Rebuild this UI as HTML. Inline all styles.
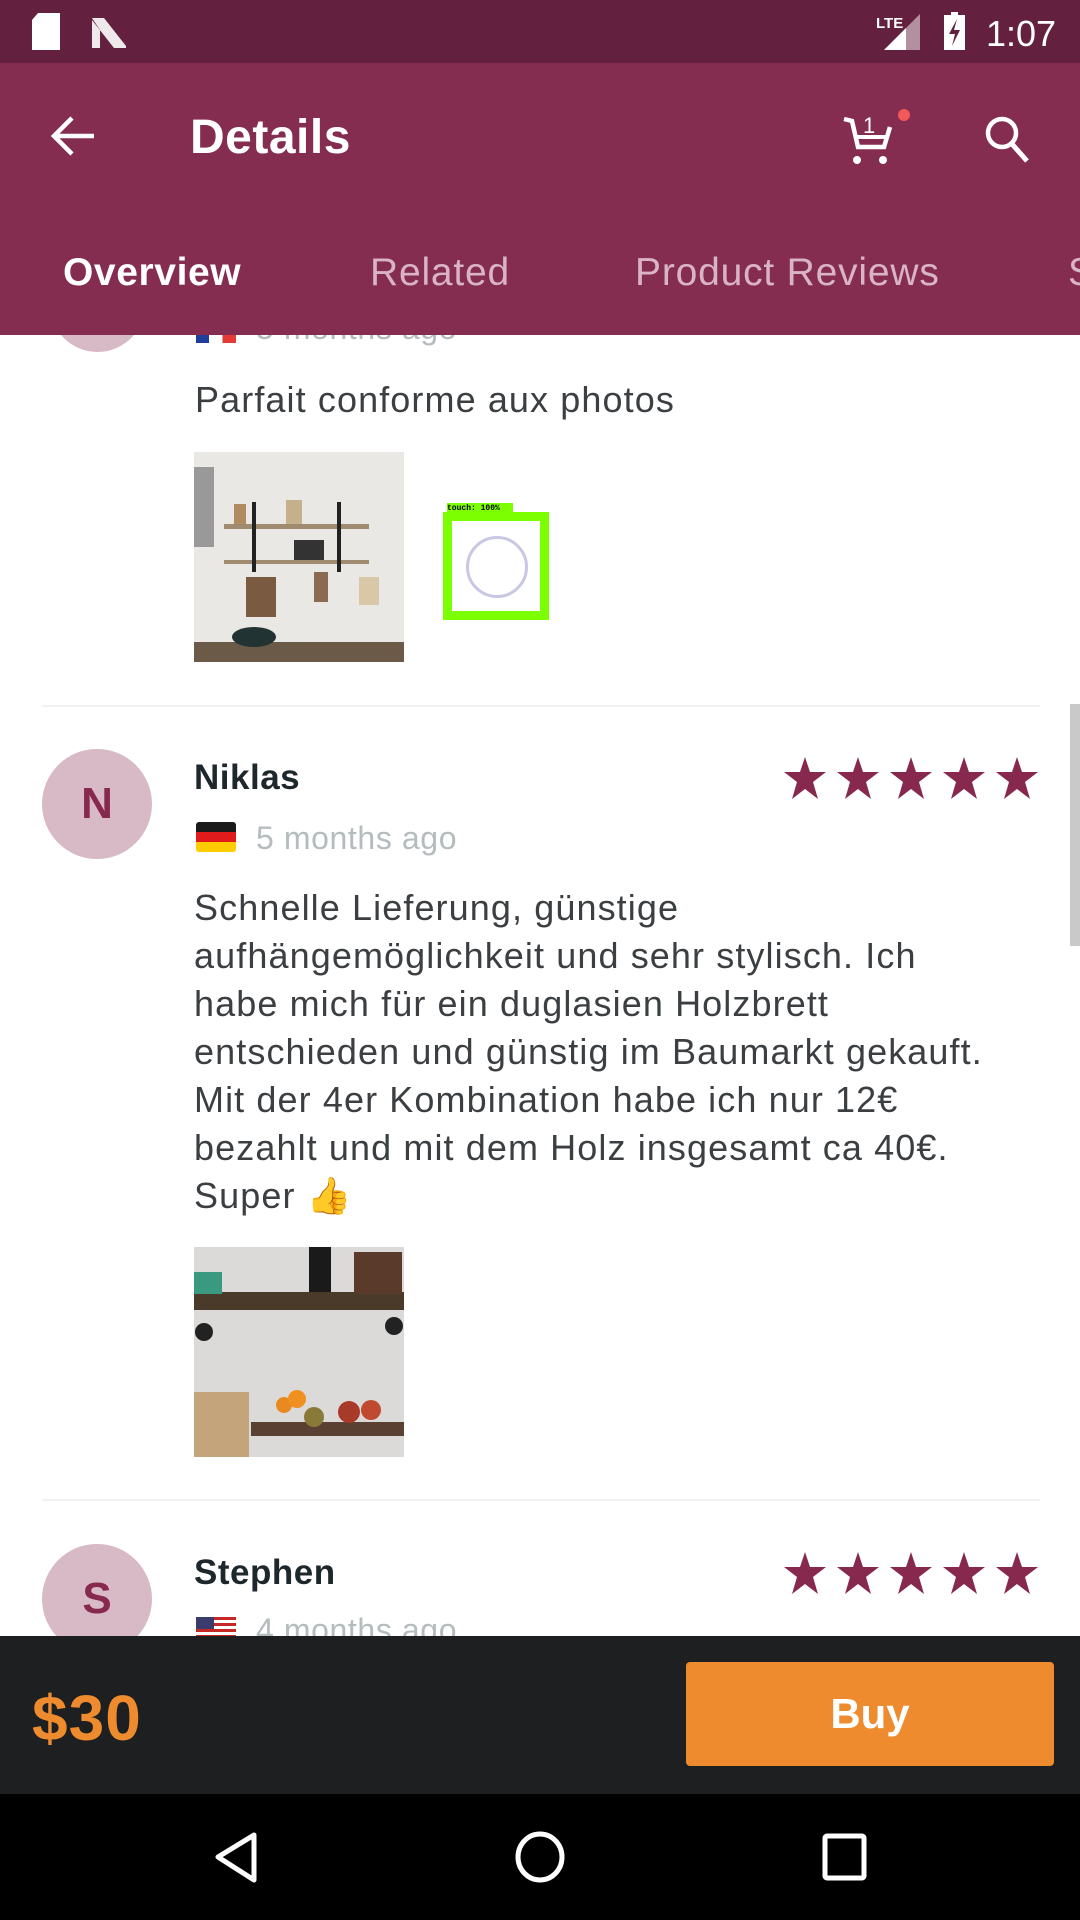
<!DOCTYPE html>
<html><head><meta charset="utf-8"><style>
*{margin:0;padding:0;box-sizing:border-box}
body{width:1080px;height:1920px;position:relative;overflow:hidden;background:#fff;font-family:"Liberation Sans",sans-serif}
.abs{position:absolute}
.t{position:absolute;white-space:nowrap}
.body{color:#3b3f42;font-size:36px;line-height:48px;letter-spacing:1.1px}
.gray{color:#b4bcbd;font-size:32px;letter-spacing:0.6px}
.name{color:#1e272c;font-size:35px;font-weight:bold;letter-spacing:0.5px}
.av{position:absolute;width:110px;height:110px;border-radius:50%;background:#d8b9c6;color:#87294f;font-size:44px;font-weight:bold;text-align:center;line-height:110px}
.tab{color:#d9b3c6;font-size:39px;letter-spacing:0.8px}
</style></head><body>
<!-- content -->
<div class="abs" style="left:50px;top:300px;width:95px;height:52px;border-radius:0 0 48px 48px;background:#d8b9c6"></div>
<div class="abs" style="left:196px;top:333px;width:40px;height:10px;background:linear-gradient(90deg,#1f3f9a 33%,#fff 33%,#fff 66%,#e53935 66%)"></div>
<div class="t gray" style="left:256px;top:310px">5 months ago</div>
<div class="t body" style="left:195px;top:376px">Parfait conforme aux photos</div>
<svg class="abs" style="left:194px;top:452px" width="210" height="210" viewBox="0 0 210 210">
<rect width="210" height="210" fill="#e9e8e4"/><rect x="0" y="190" width="210" height="20" fill="#6b5a48"/>
<rect x="30" y="72" width="145" height="5" fill="#a08a70"/><rect x="30" y="108" width="145" height="4" fill="#a08a70"/>
<rect x="58" y="50" width="4" height="70" fill="#222"/><rect x="143" y="50" width="4" height="70" fill="#222"/>
<rect x="40" y="52" width="12" height="20" fill="#b08a60"/><rect x="92" y="48" width="16" height="24" fill="#c4b08a"/>
<rect x="100" y="88" width="30" height="20" fill="#333"/><rect x="52" y="125" width="30" height="40" fill="#7a5a40"/>
<rect x="120" y="120" width="14" height="30" fill="#8a6a50"/><rect x="165" y="125" width="20" height="28" fill="#d8c8a8"/>
<rect x="0" y="15" width="20" height="80" fill="#999"/><ellipse cx="60" cy="185" rx="22" ry="10" fill="#233"/></svg>
<div class="abs" style="left:443px;top:512px;width:106px;height:108px;border:9px solid #7cff00"></div>
<div class="abs" style="left:447px;top:503px;width:66px;height:11px;background:#7cff00;font:bold 8px 'Liberation Mono',monospace;color:#000;line-height:11px">touch: 100%</div>
<div class="abs" style="left:466px;top:536px;width:62px;height:62px;border-radius:50%;border:3px solid #c8c8e4"></div>
<div class="abs" style="left:42px;top:705px;width:998px;height:2px;background:#f1f1f1"></div>
<div class="abs" style="left:1070px;top:704px;width:10px;height:242px;background:#c9c9c9"></div>

<div class="av" style="left:42px;top:749px">N</div>
<div class="t name" style="left:194px;top:758px">Niklas</div>
<svg class="abs" style="left:784px;top:757px" width="256" height="42" viewBox="0 0 256 42" fill="#87294f">
<g id="s"><path d="M21 0 L26 15 L42 15 L29 25 L34 42 L21 32 L8 42 L13 25 L0 15 L16 15Z"/></g>
<use href="#s" x="53"/><use href="#s" x="106"/><use href="#s" x="159"/><use href="#s" x="212"/></svg>
<div class="abs" style="left:196px;top:822px;width:40px;height:30px;border-radius:3px;background:linear-gradient(#1a1a1a 33%,#e01b1b 33%,#e01b1b 66%,#ffcc00 66%)"></div>
<div class="t gray" style="left:256px;top:820px">5 months ago</div>
<div class="t body" style="left:194px;top:884px">Schnelle Lieferung, günstige<br>aufhängemöglichkeit und sehr stylisch. Ich<br>habe mich für ein duglasien Holzbrett<br>entschieden und günstig im Baumarkt gekauft.<br>Mit der 4er Kombination habe ich nur 12€<br>bezahlt und mit dem Holz insgesamt ca 40€.<br>Super <span style="color:#f0d0b8">👍</span></div>
<svg class="abs" style="left:194px;top:1247px" width="210" height="210" viewBox="0 0 210 210">
<rect width="210" height="210" fill="#dcdad8"/><rect x="0" y="45" width="210" height="18" fill="#4a3a2a"/>
<rect x="0" y="25" width="28" height="22" fill="#3a9a80"/><rect x="115" y="0" width="22" height="45" fill="#1a1a1a"/>
<rect x="160" y="5" width="48" height="42" fill="#5a3a2a"/><circle cx="10" cy="85" r="9" fill="#222"/><circle cx="200" cy="79" r="9" fill="#222"/>
<rect x="0" y="145" width="55" height="65" fill="#c4a47a"/><rect x="57" y="175" width="153" height="14" fill="#5a4030"/>
<circle cx="90" cy="158" r="8" fill="#e88a20"/><circle cx="103" cy="152" r="9" fill="#f09020"/><circle cx="155" cy="165" r="11" fill="#a83a2a"/><circle cx="177" cy="163" r="10" fill="#c04a30"/><circle cx="120" cy="170" r="10" fill="#8a7a3a"/></svg>
<div class="abs" style="left:42px;top:1499px;width:998px;height:2px;background:#f1f1f1"></div>

<div class="av" style="left:42px;top:1544px">S</div>
<div class="t name" style="left:194px;top:1553px">Stephen</div>
<svg class="abs" style="left:784px;top:1552px" width="256" height="42" viewBox="0 0 256 42" fill="#87294f">
<use href="#s"/><use href="#s" x="53"/><use href="#s" x="106"/><use href="#s" x="159"/><use href="#s" x="212"/></svg>
<div class="abs" style="left:196px;top:1617px;width:40px;height:22px;background:repeating-linear-gradient(#c62828 0 3px,#fff 3px 6px)"><div style="width:18px;height:12px;background:#3c3b6e"></div></div>
<div class="t gray" style="left:256px;top:1612px">4 months ago</div>

<!-- bottom bar -->
<div class="abs" style="left:0;top:1636px;width:1080px;height:158px;background:#1d1f20"></div>
<div class="t" style="left:32px;top:1681px;color:#ee8b2e;font-size:64px;font-weight:bold;letter-spacing:1px">$30</div>
<div class="abs" style="left:686px;top:1662px;width:368px;height:104px;background:#ee8b2e;border-radius:4px;color:#fff;font-size:42px;font-weight:bold;text-align:center;line-height:104px">Buy</div>
<div class="abs" style="left:0;top:1794px;width:1080px;height:126px;background:#000"></div>
<svg class="abs" style="left:0;top:1794px" width="1080" height="126">
<path d="M254 41 L218 63 L254 86Z" fill="none" stroke="#fff" stroke-width="5" stroke-linejoin="round"/>
<ellipse cx="540" cy="63" rx="22" ry="23" fill="none" stroke="#fff" stroke-width="5"/>
<rect x="825" y="42" width="39" height="42" rx="2" fill="none" stroke="#fff" stroke-width="5"/></svg>

<!-- top -->
<div class="abs" style="left:0;top:0;width:1080px;height:63px;background:#64203f"></div>
<div class="abs" style="left:0;top:63px;width:1080px;height:272px;background:#852c51"></div>
<svg class="abs" style="left:0;top:0" width="1080" height="63">
<path d="M38 13 H60 V50 H32 V20Z" fill="#fff"/>
<path d="M92 18 L104 18 L126 46 V48 L114 48 L92 20Z M92 18 V48 L100 48 V30Z" fill="#fff" opacity=".9"/>
<text x="876" y="28" fill="#fff" font-size="15" font-family="Liberation Sans" font-weight="bold">LTE</text>
<path d="M884 50 L920 14 V50Z" fill="#fff" opacity=".5"/><path d="M884 50 L906 28 V50Z" fill="#fff"/>
<path d="M944 15 H951 V12 H958 V15 H965 V50 H944Z" fill="#fff"/><path d="M957 19 L949 34 H955 L952 46 L960 30 H954Z" fill="#64203f"/>
<text x="986" y="46" fill="#fff" font-size="36" font-family="Liberation Sans">1:07</text></svg>
<svg class="abs" style="left:0;top:63px" width="1080" height="120">
<path d="M94 73 H55 M72 55 L54 73 L72 91" fill="none" stroke="#fff" stroke-width="4.5"/>
<path d="M844 56 L852 58 L858 84 H884 L890 64" fill="none" stroke="#fff" stroke-width="4.5"/>
<path d="M856 74 H886" stroke="#fff" stroke-width="4"/>
<circle cx="857" cy="97" r="4" fill="#fff"/><circle cx="883" cy="97" r="4" fill="#fff"/>
<text x="863" y="70" fill="#fff" font-size="22" font-family="Liberation Sans">1</text>
<circle cx="904" cy="52" r="6" fill="#f0585a"/>
<circle cx="1002" cy="70" r="14" fill="none" stroke="#fff" stroke-width="4.5"/><path d="M1012 81 L1027 98" stroke="#fff" stroke-width="5"/></svg>
<div class="t" style="left:190px;top:110px;color:#fff;font-size:48px;font-weight:bold;letter-spacing:0.5px">Details</div>
<div class="t" style="left:63px;top:251px;color:#fff;font-size:39px;font-weight:bold;letter-spacing:0.6px">Overview</div>
<div class="t tab" style="left:370px;top:251px">Related</div>
<div class="t tab" style="left:635px;top:251px">Product Reviews</div>
<div class="t tab" style="left:1068px;top:251px">S</div>
</body></html>
